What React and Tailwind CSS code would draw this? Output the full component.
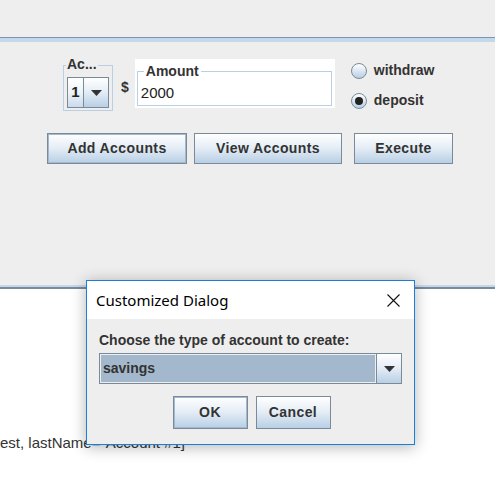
import React from "react";

const font = { fontFamily: '"Liberation Sans", Arial, sans-serif' };

const JButton = ({ children, focused, className = "" }) => (
  <div
    className={`flex items-center justify-center border border-[#7a8a99] bg-gradient-to-b from-[#ffffff] via-[#e3ecf5] to-[#b8cfe5] text-[14px] font-bold tracking-[0.4px] text-[#333333] ${className}`}
  >
    {focused ? (
      <div className="flex h-full w-full items-center justify-center border border-[#a3b8cc]">
        {children}
      </div>
    ) : (
      children
    )}
  </div>
);

const Arrow = () => (
  <svg width="11" height="6" viewBox="0 0 11 6">
    <path d="M0 0 H11 L5.5 6 Z" fill="#333333" />
  </svg>
);

const Radio = ({ checked, label }) => (
  <div className="flex h-[17px] items-center gap-[7px]">
    <div className="flex h-[16px] w-[16px] items-center justify-center rounded-full border border-[#7a8a99] bg-gradient-to-b from-[#ffffff] to-[#b8cfe5]">
      {checked && <div className="h-[8px] w-[8px] rounded-full bg-[#222222]" />}
    </div>
    <span className="text-[14px] font-bold leading-[17px] text-[#333333]">{label}</span>
  </div>
);

export default function App() {
  return (
    <div className="relative flex h-[495px] w-[495px] flex-col overflow-hidden bg-white" style={font}>
      <div className="h-[37px] bg-[#eeeeee]" />
      <div className="h-[1px] bg-[#7d93b6]" />
      <div className="h-[4px] bg-[#c4d8ec]" />

      <div className="flex h-[243px] flex-col bg-[#eeeeee]">
        <div className="mt-[17px] flex h-[50px] items-start">
          {/* Ac... titled group */}
          <div className="relative ml-[63px] mt-[6px] h-[46px] w-[50px] border border-[#b8cfe5]">
            <span className="absolute left-[2px] top-[-10px] bg-[#eeeeee] px-[1px] text-[14px] font-bold leading-[16px] text-[#333333]">
              Ac...
            </span>
            <div className="ml-[3px] mt-[11px] flex h-[31px] w-[42px] border border-[#7a8a99]">
              <div className="flex w-[16px] items-center justify-center border-r border-[#7a8a99] bg-gradient-to-b from-[#ffffff] via-[#eef3f8] to-[#c9dbec] text-[15px] font-bold text-[#222222]">
                1
              </div>
              <div className="flex flex-1 items-center justify-center bg-gradient-to-b from-[#ffffff] via-[#e3ecf5] to-[#b8cfe5]">
                <Arrow />
              </div>
            </div>
          </div>

          <span className="ml-[8px] mt-[18px] text-[14px] font-bold text-[#333333]">$</span>

          {/* Amount field */}
          <div className="ml-[6px] h-[49px] w-[200px] bg-white px-[2px] pt-[12px]">
            <div className="relative h-[35px] w-[195px] border border-[#b8cfe5]">
              <span className="absolute left-[6px] top-[-9px] bg-white px-[2px] text-[14px] font-bold leading-[16px] text-[#333333]">
                Amount
              </span>
              <div className="pl-[3px] pt-[12px] text-[15px] leading-[18px] text-[#222222]">2000</div>
            </div>
          </div>

          <div className="ml-[16px] mt-[3px] flex flex-col gap-[13px]">
            <Radio label="withdraw" />
            <Radio checked label="deposit" />
          </div>
        </div>

        <div className="mt-[24px] flex">
          <JButton focused className="ml-[47px] h-[31px] w-[140px]">Add Accounts</JButton>
          <JButton className="ml-[7px] h-[31px] w-[148px]">View Accounts</JButton>
          <JButton className="ml-[12px] h-[31px] w-[99px]">Execute</JButton>
        </div>
      </div>

      <div className="h-[2px] bg-[#c4d8ec]" />
      <div className="h-[2px] bg-[#7a8a99]" />

      {/* text area */}
      <div className="flex-1 bg-white">
        <div className="mt-[145px] whitespace-nowrap text-[15px] leading-[18px] text-[#333333]">
          est, lastName="Account #1]
        </div>
      </div>

      {/* dialog */}
      <div className="absolute left-[86px] top-[280px] flex h-[165px] w-[329px] flex-col border border-[#1a7fd9] bg-[#eeeeee] shadow-[0_2px_14px_rgba(0,0,0,0.3)]">
        <div className="flex h-[38px] items-center justify-between bg-white pl-[9px] pr-[14px]">
          <span className="text-[15px] text-black" style={{ fontFamily: '"Noto Sans", "Open Sans", sans-serif' }}>
            Customized Dialog
          </span>
          <svg width="13" height="13" viewBox="0 0 13 13">
            <path d="M0.5 0.5 L12.5 12.5 M12.5 0.5 L0.5 12.5" stroke="#111111" strokeWidth="1.1" />
          </svg>
        </div>
        <div className="flex flex-col px-[12px] pt-[13px]">
          <span className="text-[14px] font-bold leading-[16px] text-[#333333]">Choose the type of account to create:</span>
          <div className="mt-[5px] flex h-[31px] w-[303px] border border-[#7a8a99]">
            <div className="flex flex-1 items-center border-r border-[#7a8a99] bg-[#eeeeee] p-[1px]">
              <div className="flex h-full w-full items-center bg-[#a3b8cc] pl-[2px] text-[14px] font-bold text-[#333333]">
                savings
              </div>
            </div>
            <div className="flex w-[24px] items-center justify-center bg-gradient-to-b from-[#ffffff] via-[#e3ecf5] to-[#b8cfe5]">
              <Arrow />
            </div>
          </div>
          <div className="mt-[12px] flex justify-center gap-[8px] pl-[2px]">
            <JButton focused className="h-[33px] w-[75px]">OK</JButton>
            <JButton className="h-[33px] w-[75px]">Cancel</JButton>
          </div>
        </div>
      </div>
    </div>
  );
}
